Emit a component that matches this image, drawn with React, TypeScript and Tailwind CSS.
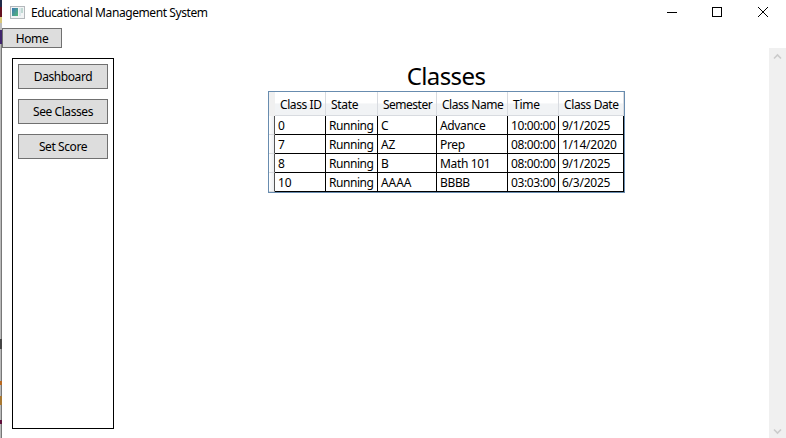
import React from "react";

const columns = [
  { title: "Class ID", head: "w-[51px] tracking-[-0.42px]", body: "w-[51px]" },
  { title: "State", head: "w-[52px] tracking-[-0.3px]", body: "w-[52px] tracking-[-0.45px]" },
  { title: "Semester", head: "w-[59px] tracking-[-0.5px]", body: "w-[59px] tracking-[-0.1px]" },
  { title: "Class Name", head: "w-[71px] tracking-[-0.46px]", body: "w-[71px] tracking-[-0.35px]" },
  { title: "Time", head: "w-[51px] tracking-[-0.25px]", body: "w-[51px] tracking-[-0.4px]" },
  { title: "Class Date", head: "w-[65px] tracking-[-0.4px]", body: "w-[65px] tracking-[-0.25px]" },
];

const rows = [
  ["0", "Running", "C", "Advance", "10:00:00", "9/1/2025"],
  ["7", "Running", "AZ", "Prep", "08:00:00", "1/14/2020"],
  ["8", "Running", "B", "Math 101", "08:00:00", "9/1/2025"],
  ["10", "Running", "AAAA", "BBBB", "03:03:00", "6/3/2025"],
];

function AppIcon() {
  return (
    <svg width="15" height="13" viewBox="0 0 15 13" shapeRendering="crispEdges">
      <defs>
        <linearGradient id="pane" x1="0" y1="0" x2="1" y2="1">
          <stop offset="0" stopColor="#3c78b4" />
          <stop offset="1" stopColor="#56b878" />
        </linearGradient>
      </defs>
      <rect x="0.5" y="0.5" width="14" height="12" fill="#f2f4f5" stroke="#b4b8bc" />
      <rect x="2" y="2" width="6" height="8" fill="url(#pane)" />
      <rect x="9" y="2" width="2" height="8" fill="#dbe7ea" />
      <rect x="11" y="2" width="2" height="5" fill="#bfd8d2" />
    </svg>
  );
}

function TitleBar() {
  return (
    <header className="flex h-[28px] items-start">
      <div className="ml-2 mt-[6px]">
        <AppIcon />
      </div>
      <h1 className="ml-[6px] mt-[5px] flex-1 leading-4 tracking-[-0.41px]">Educational Management System</h1>
      <svg className="mr-[17px] mt-[6px]" width="103" height="12" viewBox="0 0 103 12" fill="none" stroke="#000">
        <path d="M1 6.5h10" />
        <rect x="46.5" y="1.5" width="9" height="9" />
        <path d="M92 1l10 10M102 1l-10 10" />
      </svg>
    </header>
  );
}

function SideButton({ children }: { children: React.ReactNode }) {
  return (
    <button className="flex h-[25px] w-[90px] items-center justify-center border border-[#707070] bg-[#dddddd] leading-4 tracking-[-0.42px]">
      {children}
    </button>
  );
}

function ClassGrid() {
  return (
    <div className="flex h-[102px] w-[357px] border border-[#688caf] bg-[#f0f0f0]">
      <div className="flex w-[6px] flex-col">
        <div className="h-[24px]" />
        {rows.map((r) => (
          <div key={r[0]} className="h-[19px] border-b border-r border-[#d9dbdf] border-r-[#555] bg-gradient-to-r from-white to-[#eceef1]" />
        ))}
      </div>
      <div>
        <div className="flex h-[24px] bg-gradient-to-b from-white from-45% to-[#f1f3f5] to-50%">
          {columns.map((c) => (
            <div key={c.title} className={`h-[24px] whitespace-nowrap border-b border-r border-[#d8dbe0] pl-[5px] leading-[26px] ${c.head}`}>
              {c.title}
            </div>
          ))}
        </div>
        {rows.map((r) => (
          <div key={r[0]} className="flex h-[19px] bg-white">
            {r.map((v, i) => (
              <div key={columns[i].title} className={`h-[19px] whitespace-nowrap border-b border-r border-black pl-[3px] leading-[19px] ${columns[i].body}`}>
                {v}
              </div>
            ))}
          </div>
        ))}
      </div>
    </div>
  );
}

function ScrollBar() {
  return (
    <div className="flex w-[17px] flex-col items-center justify-between bg-[#f0f0f0] pb-[3px] pt-[5px]">
      <svg width="9" height="7" viewBox="0 0 9 7" fill="none" stroke="#cbcbcb" strokeWidth="1.6">
        <path d="M1 5.5l3.5-3.5L8 5.5" />
      </svg>
      <svg width="9" height="7" viewBox="0 0 9 7" fill="none" stroke="#cbcbcb" strokeWidth="1.6">
        <path d="M1 1.5l3.5 3.5L8 1.5" />
      </svg>
    </div>
  );
}

function DesktopEdge() {
  return (
    <div className="flex w-[2px] shrink-0 flex-col bg-[#b9b9b9]">
      <div className="h-[7px] bg-[#202a48]" />
      <div className="h-[10px] bg-[#641020]" />
      <div className="h-[6px] bg-[#d8c678]" />
      <div className="h-[7px] bg-[#bcbcbc]" />
      <div className="h-[14px] bg-[#40246c]" />
      <div className="h-[295px] border-r border-[#777]" />
      <div className="h-[10px] bg-[#444]" />
      <div className="h-[32px] border-r border-[#777]" />
      <div className="h-[4px] bg-[#b86820]" />
      <div className="h-[11px] border-r border-[#777]" />
      <div className="h-[9px] bg-[#a87832]" />
      <div className="h-[15px] border-r border-[#777]" />
      <div className="h-[4px] bg-[#60103c]" />
      <div className="flex-1 border-r border-[#777]" />
    </div>
  );
}

export default function App() {
  return (
    <div className="flex h-[438px] w-[786px] overflow-hidden bg-white font-['Noto_Sans','Open_Sans',sans-serif] text-[12px] text-black">
      <DesktopEdge />
      <div className="flex flex-1 flex-col">
        <TitleBar />
        <button className="flex h-[20px] w-[60px] items-center justify-center border border-[#707070] bg-[#dddddd] pt-[2px] leading-4 tracking-[-0.4px]">
          Home
        </button>
        <div className="flex flex-1">
          <nav className="ml-[10px] mt-[10px] flex h-[371px] w-[102px] flex-col items-center gap-[10px] border border-black pt-[5px]">
            <SideButton>Dashboard</SideButton>
            <SideButton>See Classes</SideButton>
            <SideButton>Set Score</SideButton>
          </nav>
          <main className="flex flex-1 flex-col items-start pl-[154px] pt-[11px]">
            <h2 className="h-[32px] w-[356px] text-center text-[24px] leading-[34px] tracking-[-0.6px]">Classes</h2>
            <ClassGrid />
          </main>
          <ScrollBar />
        </div>
      </div>
    </div>
  );
}
